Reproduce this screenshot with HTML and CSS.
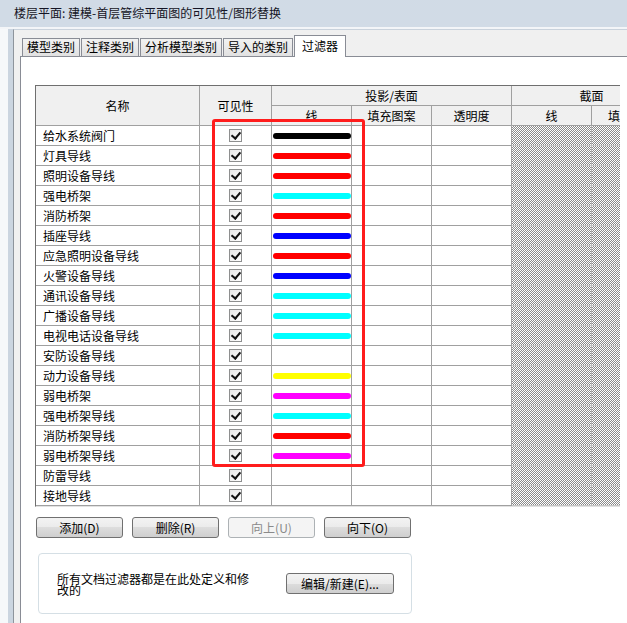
FILE: index.html
```html
<!DOCTYPE html>
<html lang="zh-CN">

<head>
  <meta charset="UTF-8">
  <title>可见性/图形替换</title>
  <link rel="stylesheet" href="styles.css">
</head>

<body>
  <!-- 标题栏 -->
  <div class="titlebar">楼层平面: 建模-首层管综平面图的可见性/图形替换</div>

  <div class="window">
    <div class="frame"></div>
    <div class="panel">
      <!-- 选项卡 -->
      <div class="tabs">
        <div class="tab">模型类别</div>
        <div class="tab">注释类别</div>
        <div class="tab">分析模型类别</div>
        <div class="tab">导入的类别</div>
        <div class="tab active">过滤器</div>
      </div>

      <div class="tab-body">
        <!-- 过滤器表格 -->
        <div class="table-wrap">
          <div class="grid">
            <div class="cell head tall">名称</div>
            <div class="cell head tall">可见性</div>
            <div class="cell head span3">投影/表面</div>
            <div class="cell head span2">截面</div>
            <div class="cell head">线</div>
            <div class="cell head">填充图案</div>
            <div class="cell head">透明度</div>
            <div class="cell head">线</div>
            <div class="cell head left">填</div>

            <div class="cell name">给水系统阀门</div>
            <div class="cell"><span class="chk"></span></div>
            <div class="cell"><span class="ln black"></span></div>
            <div class="cell"></div><div class="cell"></div>
            <div class="cell cut"></div><div class="cell cut"></div>

            <div class="cell name">灯具导线</div>
            <div class="cell"><span class="chk"></span></div>
            <div class="cell"><span class="ln red"></span></div>
            <div class="cell"></div><div class="cell"></div>
            <div class="cell cut"></div><div class="cell cut"></div>

            <div class="cell name">照明设备导线</div>
            <div class="cell"><span class="chk"></span></div>
            <div class="cell"><span class="ln red"></span></div>
            <div class="cell"></div><div class="cell"></div>
            <div class="cell cut"></div><div class="cell cut"></div>

            <div class="cell name">强电桥架</div>
            <div class="cell"><span class="chk"></span></div>
            <div class="cell"><span class="ln cyan"></span></div>
            <div class="cell"></div><div class="cell"></div>
            <div class="cell cut"></div><div class="cell cut"></div>

            <div class="cell name">消防桥架</div>
            <div class="cell"><span class="chk"></span></div>
            <div class="cell"><span class="ln red"></span></div>
            <div class="cell"></div><div class="cell"></div>
            <div class="cell cut"></div><div class="cell cut"></div>

            <div class="cell name">插座导线</div>
            <div class="cell"><span class="chk"></span></div>
            <div class="cell"><span class="ln blue"></span></div>
            <div class="cell"></div><div class="cell"></div>
            <div class="cell cut"></div><div class="cell cut"></div>

            <div class="cell name">应急照明设备导线</div>
            <div class="cell"><span class="chk"></span></div>
            <div class="cell"><span class="ln red"></span></div>
            <div class="cell"></div><div class="cell"></div>
            <div class="cell cut"></div><div class="cell cut"></div>

            <div class="cell name">火警设备导线</div>
            <div class="cell"><span class="chk"></span></div>
            <div class="cell"><span class="ln blue"></span></div>
            <div class="cell"></div><div class="cell"></div>
            <div class="cell cut"></div><div class="cell cut"></div>

            <div class="cell name">通讯设备导线</div>
            <div class="cell"><span class="chk"></span></div>
            <div class="cell"><span class="ln cyan"></span></div>
            <div class="cell"></div><div class="cell"></div>
            <div class="cell cut"></div><div class="cell cut"></div>

            <div class="cell name">广播设备导线</div>
            <div class="cell"><span class="chk"></span></div>
            <div class="cell"><span class="ln cyan"></span></div>
            <div class="cell"></div><div class="cell"></div>
            <div class="cell cut"></div><div class="cell cut"></div>

            <div class="cell name">电视电话设备导线</div>
            <div class="cell"><span class="chk"></span></div>
            <div class="cell"><span class="ln cyan"></span></div>
            <div class="cell"></div><div class="cell"></div>
            <div class="cell cut"></div><div class="cell cut"></div>

            <div class="cell name">安防设备导线</div>
            <div class="cell"><span class="chk"></span></div>
            <div class="cell"></div>
            <div class="cell"></div><div class="cell"></div>
            <div class="cell cut"></div><div class="cell cut"></div>

            <div class="cell name">动力设备导线</div>
            <div class="cell"><span class="chk"></span></div>
            <div class="cell"><span class="ln yellow"></span></div>
            <div class="cell"></div><div class="cell"></div>
            <div class="cell cut"></div><div class="cell cut"></div>

            <div class="cell name">弱电桥架</div>
            <div class="cell"><span class="chk"></span></div>
            <div class="cell"><span class="ln magenta"></span></div>
            <div class="cell"></div><div class="cell"></div>
            <div class="cell cut"></div><div class="cell cut"></div>

            <div class="cell name">强电桥架导线</div>
            <div class="cell"><span class="chk"></span></div>
            <div class="cell"><span class="ln cyan"></span></div>
            <div class="cell"></div><div class="cell"></div>
            <div class="cell cut"></div><div class="cell cut"></div>

            <div class="cell name">消防桥架导线</div>
            <div class="cell"><span class="chk"></span></div>
            <div class="cell"><span class="ln red"></span></div>
            <div class="cell"></div><div class="cell"></div>
            <div class="cell cut"></div><div class="cell cut"></div>

            <div class="cell name">弱电桥架导线</div>
            <div class="cell"><span class="chk"></span></div>
            <div class="cell"><span class="ln magenta"></span></div>
            <div class="cell"></div><div class="cell"></div>
            <div class="cell cut"></div><div class="cell cut"></div>

            <div class="cell name">防雷导线</div>
            <div class="cell"><span class="chk"></span></div>
            <div class="cell"></div>
            <div class="cell"></div><div class="cell"></div>
            <div class="cell cut"></div><div class="cell cut"></div>

            <div class="cell name">接地导线</div>
            <div class="cell"><span class="chk"></span></div>
            <div class="cell"></div>
            <div class="cell"></div><div class="cell"></div>
            <div class="cell cut"></div><div class="cell cut"></div>
          </div>
          <!-- 红色标注框 -->
          <div class="highlight"></div>
        </div>

        <!-- 操作按钮 -->
        <div class="btn-row">
          <button class="btn">添加(D)</button>
          <button class="btn">删除(R)</button>
          <button class="btn" disabled>向上(U)</button>
          <button class="btn">向下(O)</button>
        </div>

        <div class="info-box">
          <p>所有文档过滤器都是在此处定义和修改的</p>
          <button class="btn wide">编辑/新建(E)...</button>
        </div>
      </div>
    </div>
  </div>
</body>

</html>
```

FILE: styles.css
```css
/* 基础 */
* {
  margin: 0;
  padding: 0;
  box-sizing: border-box;
}

body {
  width: 627px;
  height: 623px;
  overflow: hidden;
  font-family: "Noto Sans CJK SC", "Liberation Sans", sans-serif;
  font-size: 12px;
  color: #000;
  background: #fff;
}

/* 标题栏 */
.titlebar {
  height: 27px;
  line-height: 26px;
  padding-left: 14px;
  background: #d1dbe6;
  color: #141424;
}

.window {
  display: flex;
  height: 596px;
  padding-top: 2px;
  background: #f3f5f8;
}

.frame {
  width: 13px;
  flex-shrink: 0;
  background: linear-gradient(to right, #f6f8fa 0 8px, #cbd5e0 8px 13px);
}

.panel {
  flex: 1;
  min-width: 0;
  display: flex;
  flex-direction: column;
  padding: 5px 0 0 6px;
  background: #f0f0f0;
  border-left: 1px solid #8d949c;
  border-top: 1px solid #c9d2dc;
}

/* 选项卡 */
.tabs {
  display: flex;
  align-items: flex-end;
  gap: 1px;
  padding-left: 2px;
  height: 21px;
}

.tab {
  height: 18px;
  line-height: 16px;
  padding: 0 4px;
  border: 1px solid #898c95;
  border-bottom: none;
  background: linear-gradient(#f2f2f2, #e1e1e1);
}

.tab.active {
  height: 22px;
  line-height: 19px;
  padding: 0 7px;
  margin-bottom: -1px;
  background: #fff;
  position: relative;
  z-index: 1;
}

.tab-body {
  flex: 1;
  min-width: 0;
  background: #fff;
  border-top: 1px solid #898c95;
  border-left: 1px solid #898c95;
  padding: 28px 0 0 14px;
}

/* 表格 */
.table-wrap {
  position: relative;
  width: 585px;
  height: 422px;
  overflow: hidden;
  border-top: 1px solid #6f6f6f;
  border-left: 1px solid #6f6f6f;
  border-bottom: 1px solid #e2e2e2;
}

.grid {
  display: grid;
  grid-template-columns: 164px 72px 80px 80px 80px 80px 80px;
  grid-auto-rows: 20px;
  width: max-content;
}

.cell {
  display: flex;
  align-items: center;
  justify-content: center;
  border-right: 1px solid #a0a0a0;
  border-bottom: 1px solid #a0a0a0;
  line-height: 19px;
  white-space: nowrap;
  overflow: hidden;
}

.head {
  background: #f0f0f0;
}

.head.tall {
  grid-row: span 2;
}

.head.span3 {
  grid-column: span 3;
}

.head.span2 {
  grid-column: span 2;
}

.head.left {
  justify-content: flex-start;
  padding-left: 16px;
}

.cell.name {
  justify-content: flex-start;
  padding-left: 7px;
}

.cell.cut {
  background: repeating-conic-gradient(#8a8a8a 0 25%, #fff 0 50%) 0 0 / 2px 2px;
  border-bottom-color: #c6c6c6;
  border-right-color: #b4b4b4;
}

/* 复选框 */
.chk {
  position: relative;
  width: 13px;
  height: 13px;
  border: 1px solid #8e8f8f;
  background: linear-gradient(135deg, #e6e6e6, #fff);
}

.chk::after {
  content: "";
  position: absolute;
  left: 3px;
  top: 0;
  width: 4px;
  height: 7px;
  border: solid #111;
  border-width: 0 2px 2px 0;
  transform: rotate(40deg);
}

/* 线颜色 */
.ln {
  display: block;
  width: 78px;
  height: 6px;
  margin-left: 1px;
  border-radius: 3px;
}

.ln.black { background: #000; }
.ln.red { background: #ff0000; }
.ln.cyan { background: #00ffff; }
.ln.blue { background: #0000ff; }
.ln.yellow { background: #ffff00; }
.ln.magenta { background: #ff00ff; }

.highlight {
  position: absolute;
  left: 176px;
  top: 33px;
  width: 153px;
  height: 348px;
  border: 3px solid #ff1c1c;
  border-radius: 3px;
}

/* 按钮 */
.btn-row {
  display: flex;
  gap: 9px;
  margin-top: 10px;
  padding-left: 1px;
}

.btn {
  width: 87px;
  height: 21px;
  font-family: inherit;
  font-size: 12px;
  line-height: 18px;
  color: #000;
  border: 1px solid #707070;
  border-radius: 3px;
  background: linear-gradient(#f3f3f3 0, #ebebeb 50%, #dddddd 50%, #cfcfcf 100%);
}

.btn:disabled {
  color: #8a8a8a;
  border-color: #adb2b5;
  background: #f4f4f4;
}

.btn.wide {
  width: 108px;
  margin-left: 33px;
}

.info-box {
  display: flex;
  align-items: center;
  width: 374px;
  height: 61px;
  margin: 15px 0 0 3px;
  padding-left: 18px;
  border: 1px solid #d5dfe5;
  border-radius: 4px;
}

.info-box p {
  width: 196px;
  line-height: 11px;
}
```
